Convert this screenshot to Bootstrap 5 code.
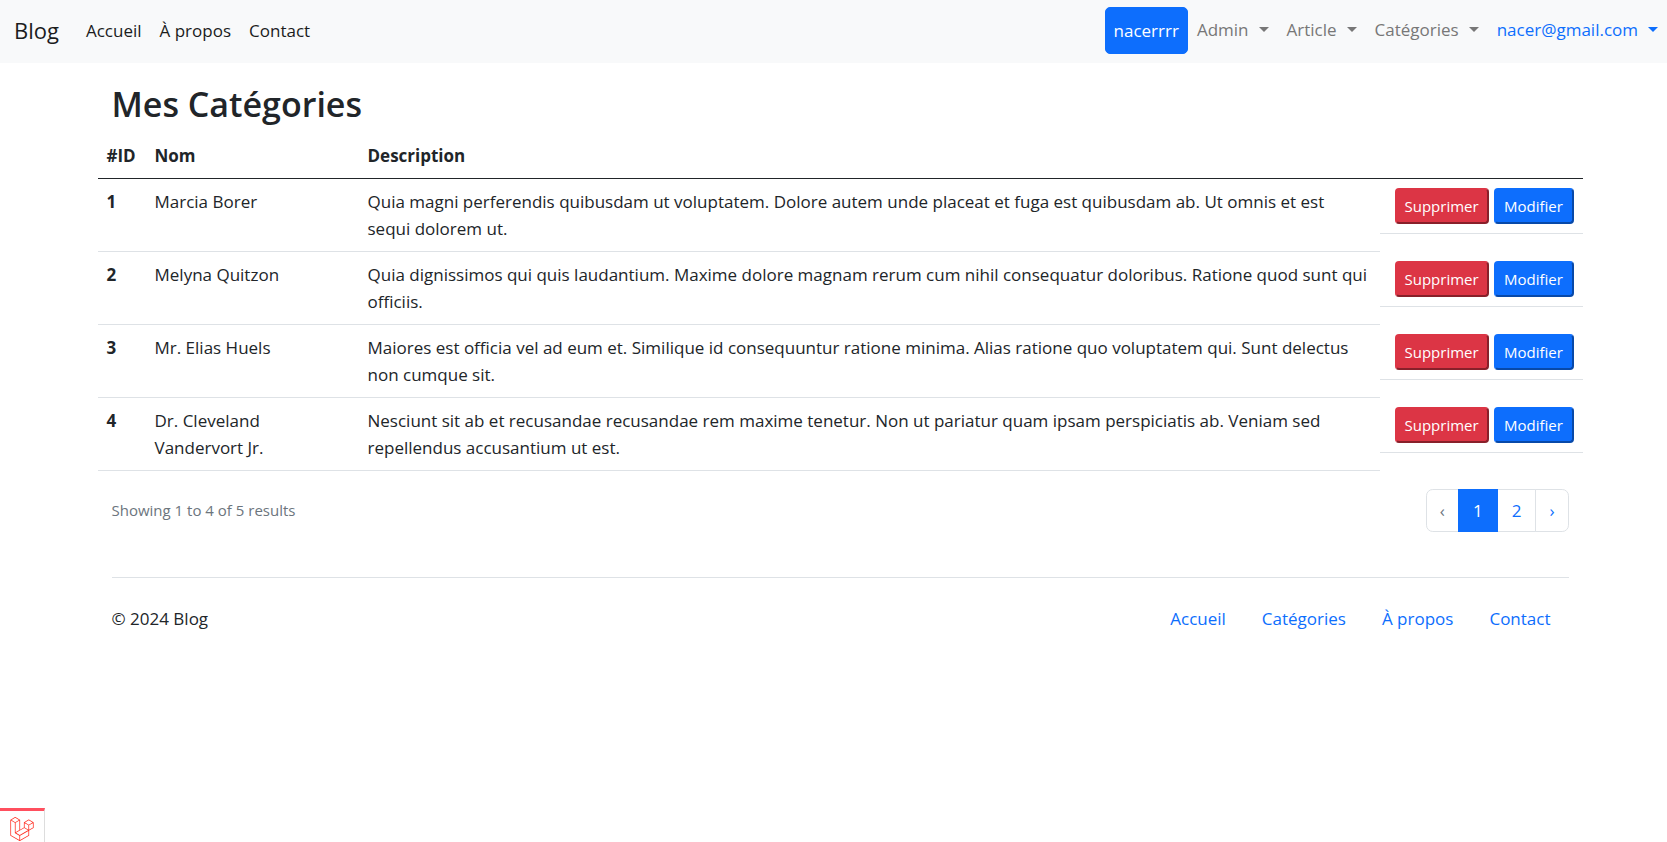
<!DOCTYPE html>
<html lang="fr">
<head>
<meta charset="utf-8">
<meta name="viewport" content="width=device-width, initial-scale=1">
<title>Mes Catégories</title>
<link rel="stylesheet" href="https://cdn.jsdelivr.net/npm/bootstrap@5.3.0/dist/css/bootstrap.min.css">
<style>
  html { font-size: 18px; }
  body { font-family: "Open Sans", "Noto Sans", sans-serif; font-size: 17px; line-height: 27px; color: #212529; }
  .page-body { padding-left: 13px; }
  .container { max-width: 1485px; padding-left: 14px; padding-right: 14px; }
  .site-nav { min-height: 63px; padding: 7px 0 9px; background: #f8f9fa; }
  .site-nav .container-fluid { padding: 0 0 0 14px; }
  .site-nav .navbar-brand { font-size: 22px; line-height: 29px; padding: 9px 0; margin-right: 18px; color: #1b1c1d; }
  .site-nav .nav-link { padding: 9px; }
  .site-nav .main-links .nav-link { color: #1b1c1d; }
  .site-nav .user-links .nav-link { color: #777; }
  .site-nav .user-links .account { color: #0d6efd; }
  .site-nav .dropdown-toggle::after { margin-left: 10px; vertical-align: 4px; border-width: 5px 5px 0; }
  .user-btn { font-size: 17px; padding: 9px 8px; height: 47px; border-radius: 5px; }
  .page-title { font-size: 34px; line-height: 43px; font-weight: 600; margin: 0; padding: 20px 0 7px; }
  .cat-table { margin: 0 -14px 18px; width: calc(100% + 28px); table-layout: fixed; }
  .cat-table > :not(caption) > * > * { padding: 9px; }
  .cat-table thead th { border-bottom-color: #212529; }
  .col-id { width: 48px; }
  .col-nom { width: 213px; }
  .col-act { width: 203px; }
  .act-group { gap: 5px; }
  .act-btn { border: 2px outset; border-radius: 4px; padding: 4px 8px; font-size: 15px; line-height: 24px; color: #fff; white-space: nowrap; }
  .act-del { background: #dc3545; border-color: #dc3545; width: 94px; }
  .act-edit { background: #0d6efd; border-color: #0d6efd; width: 80px; }
  .results { font-size: 15px; color: #6c757d; }
  .pagination .page-link { padding: 7px 14px; line-height: 27px; font-size: 17px; }
  .pagination .page-arrow { padding: 7px 13px; }
  .foot { margin-top: 45px; padding: 27px 0; border-top: 1px solid #dee2e6; }
  .foot .nav-link { padding: 0 18px; color: #0d6efd; }
  .debug-tab { position: fixed; left: 0; bottom: 0; width: 45px; height: 34px; padding: 5px 0 0 10px; text-align: left; background: #fff; border: 0; border-top: 3px solid #ff4f5e; border-right: 1px solid #ddd; overflow: hidden; line-height: 0; }
</style>
</head>
<body>
<nav class="navbar navbar-expand site-nav">
  <div class="container-fluid align-items-center">
    <a class="navbar-brand" href="#">Blog</a>
    <ul class="navbar-nav main-links me-auto">
      <li class="nav-item"><a class="nav-link" href="#">Accueil</a></li>
      <li class="nav-item"><a class="nav-link" href="#">À propos</a></li>
      <li class="nav-item"><a class="nav-link" href="#">Contact</a></li>
    </ul>
    <ul class="navbar-nav user-links">
      <li class="nav-item"><button type="button" class="btn btn-primary user-btn">nacerrrr</button></li>
      <li class="nav-item"><a class="nav-link dropdown-toggle" href="#" role="button">Admin</a></li>
      <li class="nav-item"><a class="nav-link dropdown-toggle" href="#" role="button">Article</a></li>
      <li class="nav-item"><a class="nav-link dropdown-toggle" href="#" role="button">Catégories</a></li>
      <li class="nav-item"><a class="nav-link dropdown-toggle account" href="#" role="button">nacer@gmail.com</a></li>
    </ul>
  </div>
</nav>

<div class="page-body">
<main class="container">
  <h2 class="page-title">Mes Catégories</h2>
  <table class="table cat-table">
    <thead>
      <tr><th class="col-id" scope="col">#ID</th><th class="col-nom" scope="col">Nom</th><th scope="col">Description</th><th class="col-act"></th></tr>
    </thead>
    <tbody>
      <tr>
        <th scope="row">1</th><td>Marcia Borer</td>
        <td>Quia magni perferendis quibusdam ut voluptatem. Dolore autem unde placeat et fuga est quibusdam ab. Ut omnis et est sequi dolorem ut.</td>
        <td class="act-group d-flex justify-content-end"><button type="button" class="act-btn act-del">Supprimer</button><button type="button" class="act-btn act-edit">Modifier</button></td>
      </tr>
      <tr>
        <th scope="row">2</th><td>Melyna Quitzon</td>
        <td>Quia dignissimos qui quis laudantium. Maxime dolore magnam rerum cum nihil consequatur doloribus. Ratione quod sunt qui officiis.</td>
        <td class="act-group d-flex justify-content-end"><button type="button" class="act-btn act-del">Supprimer</button><button type="button" class="act-btn act-edit">Modifier</button></td>
      </tr>
      <tr>
        <th scope="row">3</th><td>Mr. Elias Huels</td>
        <td>Maiores est officia vel ad eum et. Similique id consequuntur ratione minima. Alias ratione quo voluptatem qui. Sunt delectus non cumque sit.</td>
        <td class="act-group d-flex justify-content-end"><button type="button" class="act-btn act-del">Supprimer</button><button type="button" class="act-btn act-edit">Modifier</button></td>
      </tr>
      <tr>
        <th scope="row">4</th><td>Dr. Cleveland Vandervort Jr.</td>
        <td>Nesciunt sit ab et recusandae recusandae rem maxime tenetur. Non ut pariatur quam ipsam perspiciatis ab. Veniam sed repellendus accusantium ut est.</td>
        <td class="act-group d-flex justify-content-end"><button type="button" class="act-btn act-del">Supprimer</button><button type="button" class="act-btn act-edit">Modifier</button></td>
      </tr>
    </tbody>
  </table>

  <div class="d-flex justify-content-between align-items-center">
    <p class="results mb-0">Showing 1 to 4 of 5 results</p>
    <nav aria-label="Pagination">
      <ul class="pagination mb-0">
        <li class="page-item"><a class="page-link page-arrow text-secondary" href="#">‹</a></li>
        <li class="page-item active"><a class="page-link" href="#">1</a></li>
        <li class="page-item"><a class="page-link" href="#">2</a></li>
        <li class="page-item"><a class="page-link page-arrow" href="#">›</a></li>
      </ul>
    </nav>
  </div>

  <footer class="foot d-flex justify-content-between align-items-center">
    <span>© 2024 Blog</span>
    <ul class="nav">
      <li class="nav-item"><a class="nav-link" href="#">Accueil</a></li>
      <li class="nav-item"><a class="nav-link" href="#">Catégories</a></li>
      <li class="nav-item"><a class="nav-link" href="#">À propos</a></li>
      <li class="nav-item"><a class="nav-link" href="#">Contact</a></li>
    </ul>
  </footer>
</main>
</div>

<button type="button" class="debug-tab" aria-label="Debugbar">
  <svg width="24" height="24" viewBox="0 0 24 24" fill="#ff2d20" aria-hidden="true"><path d="M23.642 5.43a.364.364 0 01.014.1v5.149c0 .135-.073.26-.189.326l-4.323 2.49v4.934a.378.378 0 01-.188.326L9.93 23.949a.316.316 0 01-.066.027c-.008.002-.016.008-.024.01a.348.348 0 01-.192 0c-.011-.002-.02-.008-.03-.012-.02-.008-.042-.014-.062-.025L.533 18.755a.376.376 0 01-.189-.326V2.974c0-.033.005-.066.014-.098.003-.012.01-.02.014-.032a.369.369 0 01.023-.058c.004-.013.015-.022.023-.033l.033-.045c.012-.01.025-.018.037-.027.014-.012.027-.024.041-.034H.53L5.043.05a.375.375 0 01.375 0L9.93 2.647h.002c.015.01.027.021.04.033l.038.027c.013.014.02.03.033.045.008.011.02.021.025.033.01.02.017.038.024.058.003.011.01.021.013.032.01.031.014.064.014.098v9.652l3.76-2.164V5.527c0-.033.004-.066.013-.098.003-.01.01-.02.013-.032a.487.487 0 01.024-.059c.007-.012.018-.02.025-.033.012-.015.021-.03.033-.043.012-.012.025-.02.037-.028.014-.01.026-.023.041-.032h.001l4.513-2.598a.375.375 0 01.375 0l4.513 2.598c.016.01.027.021.042.031.012.01.025.018.036.028.013.014.022.03.034.044.008.012.019.021.024.033.011.02.018.04.024.06.006.01.012.021.015.032zm-.74 5.032V6.179l-1.578.908-2.182 1.256v4.283zm-4.51 7.75v-4.287l-2.147 1.225-6.126 3.498v4.325zM1.093 3.624v14.588l8.273 4.761v-4.325l-4.322-2.445-.002-.003H5.04c-.014-.01-.025-.021-.04-.031-.011-.01-.024-.018-.035-.027l-.001-.002c-.013-.012-.021-.025-.031-.04-.01-.011-.021-.022-.028-.036h-.003c-.008-.014-.013-.031-.02-.047-.006-.016-.014-.027-.018-.043a.49.49 0 01-.008-.057c-.002-.014-.006-.027-.006-.041V5.789l-2.18-1.257zM5.23.81L1.47 2.974l3.76 2.164 3.758-2.164zm1.956 13.505l2.182-1.256V3.624l-1.58.91-2.182 1.255v9.435zm11.581-10.95l-3.76 2.163 3.76 2.163 3.759-2.164zm-.376 4.978L16.21 7.087 14.63 6.18v4.283l2.182 1.256 1.58.908zm-8.65 9.654l5.514-3.148 2.756-1.572-3.757-2.163-4.323 2.489-3.941 2.27z"/></svg>
</button>
<script src="https://cdn.jsdelivr.net/npm/bootstrap@5.3.0/dist/js/bootstrap.bundle.min.js"></script>
</body>
</html>
